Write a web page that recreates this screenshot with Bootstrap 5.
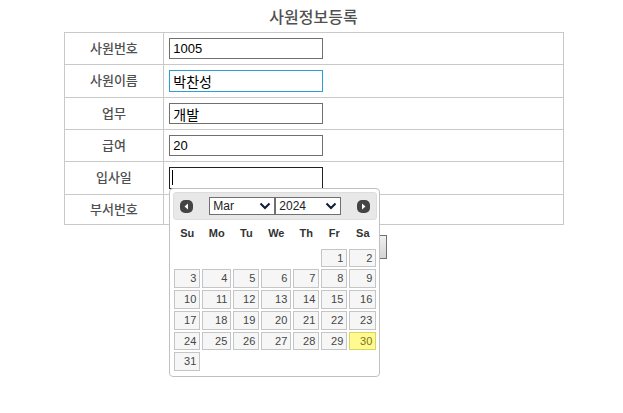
<!DOCTYPE html>
<html lang="ko">
<head>
<meta charset="utf-8">
<meta name="viewport" content="width=device-width, initial-scale=1">
<title>사원정보등록</title>
<link href="https://cdn.jsdelivr.net/npm/bootstrap@5.3.0/dist/css/bootstrap.min.css" rel="stylesheet">
<style>
body { font-family: "Liberation Sans", "Noto Sans CJK KR", sans-serif; font-size: 12px; color: #4c4c4c; background: #fff; }
.emp-form { width: 500px; max-width: 100%; padding-top: 5px; }
.emp-title { font-size: 16px; line-height: 22px; font-weight: 500; margin-bottom: 5px; color: #505050; font-family: "Noto Sans CJK KR", sans-serif; }
.emp-table { border-collapse: collapse; color: inherit; }
.emp-table > tbody > tr { height: 32px; }
.emp-table > tbody > tr.tall { height: 33px; }
.emp-table > tbody > tr.short { height: 30px; }
.emp-table > tbody > tr > th, .emp-table > tbody > tr > td { border: 1px solid #c9c9c9; padding: 0 5px; vertical-align: middle; }
.emp-table > tbody > tr > th { width: 20%; padding-bottom: 2px; color: #505050; font-family: "Noto Sans CJK KR", sans-serif; font-size: 13px; line-height: 16px; font-weight: 500; text-align: center; }
.emp-input { width: 154px; height: 21px; border: 1px solid #707070; border-radius: 0; padding: 0 3px; font-size: 13px; line-height: 19px; color: #000; background: #fff; outline: 0; }
.emp-input.hangul { font-family: "Noto Sans CJK KR", sans-serif; font-size: 14px; }
.emp-input.hovered { border-color: #2a9fd6; height: 22px; }
.emp-input.active { border-color: #222; height: 22px; }
.caret { left: 3px; top: 3px; width: 1px; height: 15px; background: #000; }
.actions { padding-top: 10px; }
.submit-btn { width: 146px; height: 24px; border: 1px solid #707070; border-radius: 0; padding: 0; font-size: 12px; color: #000; background: linear-gradient(#f0f0f0, #d4d4d4); }
.picker { top: 21px; left: 0; width: 211px; padding: 3px 2px 4px 3px; border: 1px solid #c0c0c0; border-radius: 4px; background: #fff; z-index: 5; color: #333; }
.picker-head { height: 28px; padding: 0 6px; background: #e8e8e8; border: 1px solid #ddd; border-radius: 3px; }
.picker-head select { width: 66px; height: 18px; border: 1px solid #707070; border-radius: 0; padding: 0 3px; font-size: 12px; line-height: 16px; color: #222; appearance: none; background: #fff url("data:image/svg+xml,%3Csvg xmlns='http://www.w3.org/2000/svg' viewBox='0 0 12 8'%3E%3Cpath d='M1.5 1.5l4.500 4.500 4.500-4.500' fill='none' stroke='%23101c38' stroke-width='2'/%3E%3C/svg%3E") no-repeat right 3px center / 12px 8px; }
.step { width: 13px; height: 13px; line-height: 0; }
.days { table-layout: fixed; border-collapse: collapse; font-size: 11px; line-height: 15px; color: #333; }
.days th { height: 28px; padding: 0 0 2px; text-align: center; font-weight: 700; }
.days td { height: 21px; padding: 1px; }
.days .row-a td { height: 20px; }
.days button { display: block; width: 100%; height: 19px; border: 1px solid #c5c5c5; background: #f6f6f6; padding: 0 3px; text-align: right; line-height: 17px; color: #454545; }
.days .row-a button { height: 18px; }
.days button.today { border-color: #dad55e; background: #fffa90; color: #777620; }
.w28 { width: 28px; } .w29 { width: 29px; } .w31 { width: 31px; } .w32 { width: 32px; }
</style>
</head>
<body class="min-vh-100">
<div class="container-fluid min-vh-100 ps-2 pe-1">
<form class="emp-form mx-auto">
  <h1 class="emp-title text-center">사원정보등록</h1>
  <table class="emp-table w-100">
    <tbody>
      <tr><th scope="row"><label for="no">사원번호</label></th><td><input class="emp-input d-block" id="no" type="text" value="1005"></td></tr>
      <tr class="tall"><th scope="row"><label for="name">사원이름</label></th><td><input class="emp-input hangul hovered d-block" id="name" type="text" value="박찬성"></td></tr>
      <tr><th scope="row"><label for="job">업무</label></th><td><input class="emp-input hangul d-block" id="job" type="text" value="개발"></td></tr>
      <tr><th scope="row"><label for="pay">급여</label></th><td><input class="emp-input d-block" id="pay" type="text" value="20"></td></tr>
      <tr class="tall"><th scope="row"><label for="hired">입사일</label></th><td>
        <div class="position-relative">
          <input class="emp-input active d-block" id="hired" type="text">
          <span class="caret position-absolute"></span>
          <div class="picker position-absolute">
            <div class="picker-head d-flex align-items-center justify-content-between">
              <button type="button" class="step border-0 p-0 bg-transparent" aria-label="Prev"><svg width="13" height="13" viewBox="0 0 13 13"><rect width="13" height="13" rx="5" fill="#444"/><path d="M8 3.500v6L4.500 6.500z" fill="#fff"/></svg></button>
              <div class="d-flex">
                <select aria-label="Month"><option>Mar</option></select>
                <select aria-label="Year"><option>2024</option></select>
              </div>
              <button type="button" class="step border-0 p-0 bg-transparent" aria-label="Next"><svg width="13" height="13" viewBox="0 0 13 13"><rect width="13" height="13" rx="5" fill="#444"/><path d="M5 3.500v6L8.500 6.500z" fill="#fff"/></svg></button>
            </div>
            <table class="days w-100">
              <colgroup><col class="w28"><col class="w31"><col class="w28"><col class="w32"><col class="w28"><col class="w28"><col class="w29"></colgroup>
              <thead><tr><th>Su</th><th>Mo</th><th>Tu</th><th>We</th><th>Th</th><th>Fr</th><th>Sa</th></tr></thead>
              <tbody>
                <tr class="row-a"><td colspan="5"></td><td><button type="button">1</button></td><td><button type="button">2</button></td></tr>
                <tr><td><button type="button">3</button></td><td><button type="button">4</button></td><td><button type="button">5</button></td><td><button type="button">6</button></td><td><button type="button">7</button></td><td><button type="button">8</button></td><td><button type="button">9</button></td></tr>
                <tr><td><button type="button">10</button></td><td><button type="button">11</button></td><td><button type="button">12</button></td><td><button type="button">13</button></td><td><button type="button">14</button></td><td><button type="button">15</button></td><td><button type="button">16</button></td></tr>
                <tr><td><button type="button">17</button></td><td><button type="button">18</button></td><td><button type="button">19</button></td><td><button type="button">20</button></td><td><button type="button">21</button></td><td><button type="button">22</button></td><td><button type="button">23</button></td></tr>
                <tr class="row-a"><td><button type="button">24</button></td><td><button type="button">25</button></td><td><button type="button">26</button></td><td><button type="button">27</button></td><td><button type="button">28</button></td><td><button type="button">29</button></td><td><button type="button" class="today">30</button></td></tr>
                <tr><td><button type="button">31</button></td><td colspan="6"></td></tr>
              </tbody>
            </table>
          </div>
        </div>
      </td></tr>
      <tr class="short"><th scope="row">부서번호</th><td></td></tr>
    </tbody>
  </table>
  <div class="actions d-flex justify-content-center">
    <button type="submit" class="submit-btn" aria-label="등록"></button>
  </div>
</form>
</div>
<script src="https://cdn.jsdelivr.net/npm/bootstrap@5.3.0/dist/js/bootstrap.bundle.min.js"></script>
</body>
</html>
